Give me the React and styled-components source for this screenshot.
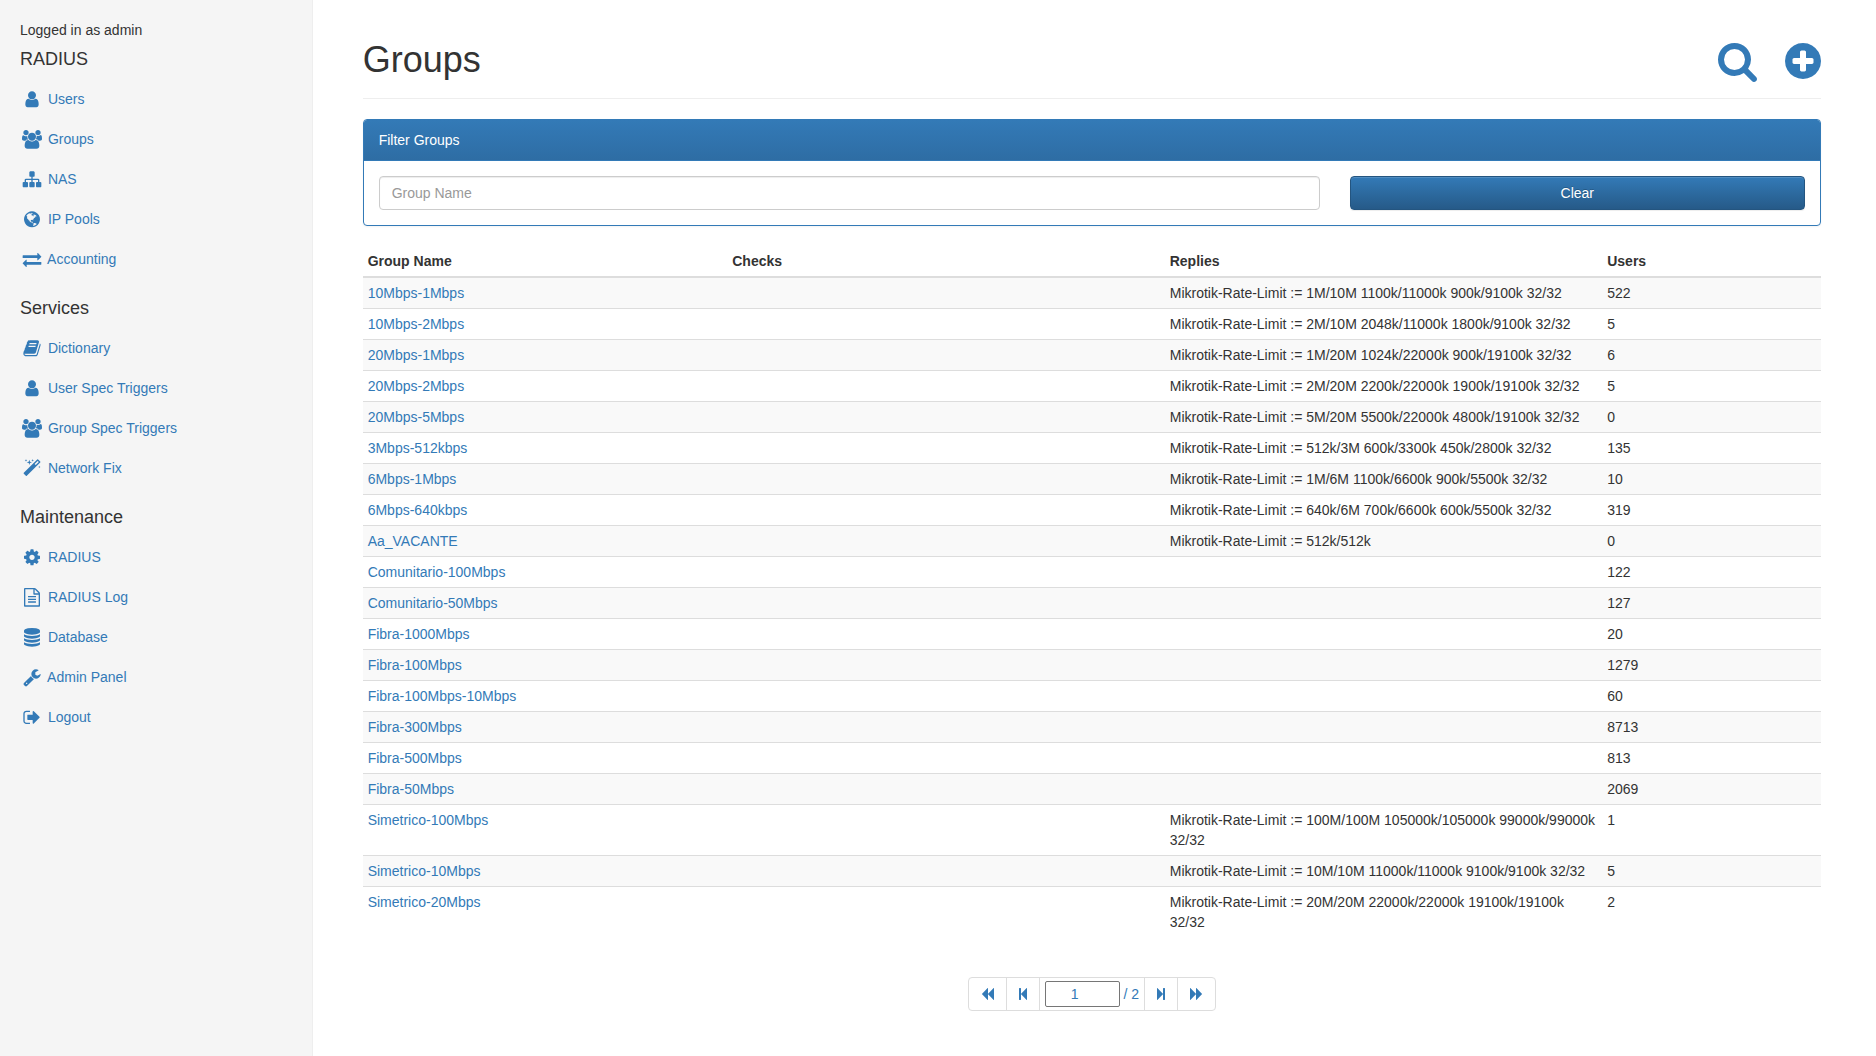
import React, { useState } from "react";
import styled, { createGlobalStyle, ThemeProvider } from "styled-components";

const theme = {
  link: "#337ab7",
  text: "#333",
  line: "#ddd",
  faint: "#eee",
  panel: "#f5f5f5",
  stripe: "#f9f9f9",
};

const GlobalStyle = createGlobalStyle`
  *, *::before, *::after { box-sizing: border-box; }
  body {
    margin: 0;
    background: #fff;
    color: #333;
    font-family: "Liberation Sans", Arial, sans-serif;
    font-size: 14px;
    line-height: 20px;
  }
  a { color: #337ab7; text-decoration: none; }
`;

/* Glyph outlines, drawn on a 1792-unit em square. */
const glyphs = {
  user: "M1536 1399q0 109-62.5 187t-150.5 78h-854q-88 0-150.5-78t-62.5-187q0-85 8.5-160.5t31.5-152 58.5-131 94-89 134.5-34.5q131 128 313 128t313-128q76 0 134.5 34.5t94 89 58.5 131 31.5 152 8.5 160.5zm-256-887q0 159-112.5 271.5t-271.5 112.5-271.5-112.5-112.5-271.5 112.5-271.5 271.5-112.5 271.5 112.5 112.5 271.5z",
  users: "M657 896q-162 5-265 128h-134q-82 0-138-40.5t-56-118.5q0-353 124-353 6 0 43.5 21t97.5 42.5 119 21.5q67 0 133-23-5 37-5 66 0 159 81 288zm1071 637q0 120-73 189.5t-194 69.5h-874q-121 0-194-69.5t-73-189.5q0-53 3.5-103.5t14-109 26.5-108.5 43-97.5 62-81 85.5-53.5 111.5-20q10 0 43 21.5t73 48 107 48 135 21.5 135-21.5 107-48 73-48 43-21.5q61 0 111.5 20t85.5 53.5 62 81 43 97.5 26.5 108.5 14 109 3.5 103.5zm-1024-1277q0 106-75 181t-181 75-181-75-75-181 75-181 181-75 181 75 75 181zm704 384q0 159-112.5 271.5t-271.5 112.5-271.5-112.5-112.5-271.5 112.5-271.5 271.5-112.5 271.5 112.5 112.5 271.5zm576 225q0 78-56 118.5t-138 40.5h-134q-103-123-265-128 81-129 81-288 0-29-5-66 66 23 133 23 59 0 119-21.5t97.5-42.5 43.5-21q124 0 124 353zm-128-609q0 106-75 181t-181 75-181-75-75-181 75-181 181-75 181 75 75 181z",
  sitemap: "M1792 1248v320q0 40-28 68t-68 28h-320q-40 0-68-28t-28-68v-320q0-40 28-68t68-28h96v-192h-512v192h96q40 0 68 28t28 68v320q0 40-28 68t-68 28h-320q-40 0-68-28t-28-68v-320q0-40 28-68t68-28h96v-192h-512v192h96q40 0 68 28t28 68v320q0 40-28 68t-68 28h-320q-40 0-68-28t-28-68v-320q0-40 28-68t68-28h96v-192q0-52 38-90t90-38h512v-192h-96q-40 0-68-28t-28-68v-320q0-40 28-68t68-28h320q40 0 68 28t28 68v320q0 40-28 68t-68 28h-96v192h512q52 0 90 38t38 90v192h96q40 0 68 28t28 68z",
  globe: "M896 128q209 0 385.5 103t279.5 279.5 103 385.5-103 385.5-279.5 279.5-385.5 103-385.5-103-279.5-279.5-103-385.5 103-385.5 279.5-279.5 385.5-103zm274 521q-2 1-9.5 9.5t-13.5 9.5q2 0 4.5-5t5-11 3.5-7q6-7 22-15 14-6 52-12 34-8 51 11-2-2 9.5-13t14.5-12q3-2 15-4.5t15-7.5l2-22q-12 1-17.5-7t-6.5-21q0 2-6 8 0-7-4.5-8t-11.5 1-9 1q-10-3-15-7.5t-8-16.5-4-15q-2-5-9.5-11t-9.5-10q-1-2-2.5-5.5t-3-6.5-4-5.5-5.5-2.5-7 5-7.5 10-4.5 5q-3-2-6-1.5t-4.5 1-4.5 3-5 3.5q-3 2-8.5 3t-8.5 2q15-5-1-11-10-4-16-3 9-4 7.5-12t-8.5-14h5q-1-4-8.5-8.5t-17.5-8.5-13-6q-8-5-34-9.5t-33-.5q-5 6-4.5 10.5t4 14 3.5 12.5q1 6-5.5 13t-6.5 12q0 7 14 15.5t10 21.5q-3 8-16 16t-16 12q-5 8-1.5 18.5t10.5 16.5q2 2 1.5 4t-3.5 4.5-5.5 4-6.5 3.5l-3 2q-11 5-20.5-6t-13.5-26q-7-25-16-30-23-8-29 1-5-13-41-26-25-9-58-4 6-1 0-15-7-15-19-12 3-6 4-17.5t1-13.5q3-13 12-23 1-1 7-8.5t9.5-13.5.5-6q35 4 50-11 5-5 11.5-17t10.5-17q9-6 14-5.5t14.5 5.5 14.5 5q14 1 15.5-11t-7.5-20q12 1 3-17-4-7-8-9-12-4-27 5-8 4 2 8-1-1-9.5 10.5t-16.5 17.5-16-5q-1-1-5.5-13.5t-9.5-13.5q-8 0-16 15 3-8-11-15t-24-8q19-12-8-27-7-4-20.5-5t-19.5 4q-5 7-5.5 11.5t5 8 10.5 5.5 11.5 4 8.5 3q14 10 8 14-2 1-8.5 3.5t-11.5 4.5-6 4q-3 4 0 14t-2 14q-5-5-9-17.5t-7-16.5q7 9-25 6l-10-1q-4 0-16 2t-20.5 1-13.5-8q-4-8 0-20 1-4 4-2-4-3-11-9.5t-10-8.5q-46 15-94 41 6 1 12-1 5-2 13-6.5t10-5.5q34-14 42-7l5-5q14 16 20 25-7-4-30-1-20 6-22 12 7 12 5 18-4-3-11.5-10t-14.5-11-15-5q-16 0-22 1-146 80-235 222 7 7 12 8 4 1 5 9t2.5 11 11.5-3q9 8 3 19 1-1 44 27 19 17 21 21 3 11-10 18-1-2-9-9t-9-4q-3 5 .5 18.5t10.5 12.5q-7 0-9.5 16t-2.5 35.5-1 23.5l2 1q-3 12 5.5 34.5t21.5 19.5q-13 3 20 43 6 8 8 9 3 2 12 7.5t15 10 10 10.5q4 5 10 22.5t14 23.5q-2 6 9.5 20t10.5 23q-1 0-2.5 1t-2.5 1q3 7 15.5 14t15.5 13q1 3 2 10t3 11 8 2q2-20-24-62-15-25-17-29-3-5-5.5-15.5t-4.5-14.5q2 0 6 1.5t8.5 3.5 7.5 4 2 3q-3 7 2 17.5t12 18.5 17 19 12 13q6 6 14 19.5t0 13.5q9 0 20 10t17 20q5 8 8 26t5 24q2 7 8.5 13.5t12.5 9.5l16 8 13 7q5 2 18.5 10.5t21.5 11.5q10 4 16 4t14.5-2.5 13.5-3.5q15-2 29 15t21 21q36 19 55 11-2 1 .5 7.5t8 15.5 9 14.5 5.5 8.5q5 6 18 15t18 15q6-4 7-9-3 8 7 20t18 10q14-3 14-32-31 15-49-18 0-1-2.5-5.5t-4-8.5-2.5-8.5 0-7.5 5-3q9 0 10-3.5t-2-12.5-4-13q-1-8-11-20t-12-15q-5 9-16 8t-16-9q0 1-1.5 5.5t-1.5 6.5q-13 0-15-1 1-3 2.5-17.5t3.5-22.5q1-4 5.5-12t7.5-14.5 4-12.5-4.5-9.5-17.5-2.5q-19 1-26 20-1 3-3 10.5t-5 11.5-9 7q-7 3-24 2t-24-5q-13-8-22.5-29t-9.5-37q0-10 2.5-26.5t3-25-5.5-24.5q3-2 9-9.5t10-10.5q2-1 4.5-1.5t4.5 0 4-1.5 3-6q-1-1-4-3-3-3-4-3 7 3 28.5-1.5t27.5 1.5q15 11 22-2 0-1-2.5-9.5t-.5-13.5q5 27 29 9 3 3 15.5 5t17.5 5q3 2 7 5.5t5.5 4.5 5-.5 8.5-6.5q10 14 12 24 11 40 19 44 7 3 11 2t4.5-9.5 0-14-1.5-12.5l-1-8v-18l-1-8q-15-3-18.5-12t1.5-18.5 15-18.5q1-1 8-3.5t15.5-6.5 12.5-8q21-19 15-35 7 0 11-9-1 0-5-3t-7.5-5-4.5-2q9-5 2-16 5-3 7.5-11t7.5-10q9 12 21 2 8-8 1-16 5-7 20.5-10.5t18.5-9.5q7 2 8-2t1-12 3-12q4-5 15-9t13-5l17-11q3-4 0-4 18 2 31-11 10-11-6-20 3-6-3-9.5t-15-5.5q3-1 11.5-.5t10.5-1.5q15-10-7-16-17-5-43 12zm-163 877q206-36 351-189-3-3-12.5-4.5t-12.5-3.5q-18-7-24-8 1-7-2.5-13t-8-9-12.5-8-11-7q-2-2-7-6t-7-5.5-7.5-4.5-8.5-2-10 1l-3 1q-3 1-5.5 2.5t-5.5 3-4 3 0 2.5q-21-17-36-22-5-1-11-5.5t-10.5-7-10-1.5-11.5 7q-5 5-6 15t-2 13q-7-5 0-17.5t2-18.5q-3-6-10.5-4.5t-12 4.5-11.5 8.5-9 6.5-8.5 5.5-8.5 7.5q-3 4-6 12t-5 11q-2-4-11.5-6.5t-9.5-5.5q2 10 4 35t5 38q7 31-12 48-27 25-29 40-4 22 12 26 0 7-8 20.5t-7 21.5q0 6 2 16z",
  exchange: "M1792 1184v192q0 13-9.5 22.5t-22.5 9.5h-1376v192q0 13-9.5 22.5t-22.5 9.5q-12 0-24-10l-319-320q-9-9-9-22 0-14 9-23l320-320q9-9 23-9 13 0 22.5 9.5t9.5 22.5v192h1376q13 0 22.5 9.5t9.5 22.5zm0-544q0 14-9 23l-320 320q-9 9-23 9-13 0-22.5-9.5t-9.5-22.5v-192h-1376q-13 0-22.5-9.5t-9.5-22.5v-192q0-13 9.5-22.5t22.5-9.5h1376v-192q0-14 9-23t23-9q12 0 24 10l319 319q9 9 9 23z",
  book: "M1703 478q40 57 18 129l-275 906q-19 64-76.5 107.5t-122.5 43.5h-923q-77 0-148.5-53.5t-99.5-131.5q-24-67-2-127 0-4 3-27t4-37q1-8-3-21.5t-3-19.5q2-11 8-21t16.5-23.5 16.5-23.5q23-38 45-91.5t30-91.5q3-10 .5-30t-.5-28q3-11 17-28t17-23q21-36 42-92t25-90q1-9-2.5-32t.5-28q4-13 22-30.5t22-22.5q19-26 42.5-84.5t27.5-96.5q1-8-3-25.5t-2-26.5q2-8 9-18t18-23 17-21q8-12 16.5-30.5t15-35 16-36 19.5-32 26.5-23.5 36-11.5 47.5 5.5l-1 3q38-9 51-9h761q74 0 114 56t18 130l-274 906q-36 119-71.5 153.5t-128.5 34.5h-869q-27 0-38 15-11 16-1 43 24 70 144 70h923q29 0 56-15.5t35-41.5l300-987q7-22 5-57 38 15 59 43zm-1064 2q-4 13 2 22.5t20 9.5h608q13 0 25.5-9.5t16.5-22.5l21-64q4-13-2-22.5t-20-9.5h-608q-13 0-25.5 9.5t-16.5 22.5zm-83 256q-4 13 2 22.5t20 9.5h608q13 0 25.5-9.5t16.5-22.5l21-64q4-13-2-22.5t-20-9.5h-608q-13 0-25.5 9.5t-16.5 22.5z",
  magic: "M1254 581l293-293-107-107-293 293zm447-293q0 27-18 45l-1286 1286q-18 18-45 18t-45-18l-198-198q-18-18-18-45t18-45l1286-1286q18-18 45-18t45 18l198 198q18 18 18 45zm-1351-190l98 30-98 30-30 98-30-98-98-30 98-30 30-98zm350 162l196 60-196 60-60 196-60-196-196-60 196-60 60-196zm930 478l98 30-98 30-30 98-30-98-98-30 98-30 30-98zm-640-640l98 30-98 30-30 98-30-98-98-30 98-30 30-98z",
  cog: "M1152 896q0-106-75-181t-181-75-181 75-75 181 75 181 181 75 181-75 75-181zm512-109v222q0 12-8 23t-20 13l-185 28q-19 54-39 91 35 50 107 138 10 12 10 25t-9 23q-27 37-99 108t-94 71q-12 0-26-9l-138-108q-44 23-91 38-16 136-29 186-7 28-36 28h-222q-14 0-24.5-8.5t-11.5-21.5l-28-184q-49-16-90-37l-141 107q-10 9-25 9-14 0-25-11-126-114-165-168-7-10-7-23 0-12 8-23 15-21 51-66.5t54-70.5q-27-50-41-99l-183-27q-13-2-21-12.5t-8-23.5v-222q0-12 8-23t19-13l186-28q14-46 39-92-40-57-107-138-10-12-10-24 0-10 9-23 26-36 98.5-107.5t94.5-71.5q13 0 26 10l138 107q44-23 91-38 16-136 29-186 7-28 36-28h222q14 0 24.5 8.5t11.5 21.5l28 184q49 16 90 37l142-107q9-9 24-9 13 0 25 10 129 119 165 170 7 8 7 22 0 12-8 23-15 21-51 66.5t-54 70.5q26 50 41 98l183 28q13 2 21 12.5t8 23.5z",
  fileText: "M1596 380q28 28 48 76t20 88v1152q0 40-28 68t-68 28h-1344q-40 0-68-28t-28-68v-1600q0-40 28-68t68-28h896q40 0 88 20t76 48zm-444-244v376h376q-10-29-22-41l-313-313q-12-12-41-22zm384 1528v-1024h-416q-40 0-68-28t-28-68v-416h-768v1536h1280zm-1024-864q0-14 9-23t23-9h704q14 0 23 9t9 23v64q0 14-9 23t-23 9h-704q-14 0-23-9t-9-23v-64zm736 224q14 0 23 9t9 23v64q0 14-9 23t-23 9h-704q-14 0-23-9t-9-23v-64q0-14 9-23t23-9h704zm0 256q14 0 23 9t9 23v64q0 14-9 23t-23 9h-704q-14 0-23-9t-9-23v-64q0-14 9-23t23-9h704z",
  database: "M896 768q237 0 443-43t325-127v170q0 69-103 128t-280 93.5-385 34.5-385-34.5-280-93.5-103-128v-170q119 84 325 127t443 43zm0 768q237 0 443-43t325-127v170q0 69-103 128t-280 93.5-385 34.5-385-34.5-280-93.5-103-128v-170q119 84 325 127t443 43zm0-384q237 0 443-43t325-127v170q0 69-103 128t-280 93.5-385 34.5-385-34.5-280-93.5-103-128v-170q119 84 325 127t443 43zm0-1152q208 0 385 34.5t280 93.5 103 128v128q0 69-103 128t-280 93.5-385 34.5-385-34.5-280-93.5-103-128v-128q0-69 103-128t280-93.5 385-34.5z",
  wrench: "M448 1472q0-26-19-45t-45-19-45 19-19 45 19 45 45 19 45-19 19-45zm644-420l-682 682q-37 37-90 37-52 0-91-37l-106-108q-38-36-38-90 0-53 38-91l681-681q39 98 114.5 173.5t173.5 114.5zm634-435q0 39-23 106-47 134-164.5 217.5t-258.5 83.5q-185 0-316.5-131.5t-131.5-316.5 131.5-316.5 316.5-131.5q58 0 121.5 16.5t107.5 46.5q16 11 16 28t-16 28l-293 169v224l193 107q5-3 79-48.5t135.5-81 70.5-35.5q15 0 23.5 10t8.5 25z",
  signOut: "M704 1440q0 4 1 20t.5 26.5-3 23.5-10 19.5-20.5 6.5h-320q-119 0-203.5-84.5t-84.5-203.5v-704q0-119 84.5-203.5t203.5-84.5h320q13 0 22.5 9.5t9.5 22.5q0 4 1 20t.5 26.5-3 23.5-10 19.5-20.5 6.5h-320q-66 0-113 47t-47 113v704q0 66 47 113t113 47h312l11.5 1 11.5 3 8 5.5 7 9 2 13.5zm928-544q0 26-19 45l-544 544q-19 19-45 19t-45-19-19-45v-288h-448q-26 0-45-19t-19-45v-384q0-26 19-45t45-19h448v-288q0-26 19-45t45-19 45 19l544 544q19 19 19 45z",
  search: "M1216 832q0-185-131.5-316.5t-316.5-131.5-316.5 131.5-131.5 316.5 131.5 316.5 316.5 131.5 316.5-131.5 131.5-316.5zm512 832q0 52-38 90t-90 38q-54 0-90-38l-343-342q-179 124-399 124-143 0-273.5-55.5t-225-150-150-225-55.5-273.5 55.5-273.5 150-225 225-150 273.5-55.5 273.5 55.5 225 150 150 225 55.5 273.5q0 220-124 399l343 343q37 37 37 90z",
  plusCircle: "M1344 960v-128q0-26-19-45t-45-19h-256v-256q0-26-19-45t-45-19h-128q-26 0-45 19t-19 45v256h-256q-26 0-45 19t-19 45v128q0 26 19 45t45 19h256v256q0 26 19 45t45 19h128q26 0 45-19t19-45v-256h256q26 0 45-19t19-45zm320-64q0 209-103 385.5t-279.5 279.5-385.5 103-385.5-103-279.5-279.5-103-385.5 103-385.5 279.5-279.5 385.5-103 385.5 103 279.5 279.5 103 385.5z",
  backward: "M1683 141q19-19 32-13t13 32v1472q0 26-13 32t-32-13l-710-710q-9-9-13-19v710q0 26-13 32t-32-13l-710-710q-19-19-19-45t19-45l710-710q19-19 32-13t13 32v710q4-10 13-19z",
  forward: "M109 1651q-19 19-32 13t-13-32v-1472q0-26 13-32t32 13l710 710q8 8 13 19v-710q0-26 13-32t32 13l710 710q19 19 19 45t-19 45l-710 710q-19 19-32 13t-13-32v-710q-5 10-13 19z",
  stepBackward: "M1363 141q19-19 32-13t13 32v1472q0 26-13 32t-32-13l-710-710q-8-9-13-19v678q0 26-19 45t-45 19h-128q-26 0-45-19t-19-45v-1408q0-26 19-45t45-19h128q26 0 45 19t19 45v678q5-10 13-19z",
  stepForward: "M429 1651q-19 19-32 13t-13-32v-1472q0-26 13-32t32 13l710 710q8 8 13 19v-678q0-26 19-45t45-19h128q26 0 45 19t19 45v1408q0 26-19 45t-45 19h-128q-26 0-45-19t-19-45v-678q-5 10-13 19z",
};

const Svg = styled.svg`
  display: inline-block;
  vertical-align: top;
  width: ${(p) => p.$w}px;
  height: ${(p) => p.$h}px;
  fill: currentColor;
`;

const Icon = ({ name, w, h, box }) => (
  <Svg $w={w} $h={h} viewBox={box} aria-hidden="true">
    <path d={glyphs[name]} />
  </Svg>
);

const NavIcon = ({ name }) => (
  <Icon name={name} w={24} h={20} box={name === "users" ? "-128 -96 2304 1920" : "-256 -96 2304 1920"} />
);

const Layout = styled.div`
  display: grid;
  grid-template-columns: minmax(0, 1fr) minmax(0, 5fr);
  min-height: 100vh;
`;

const Sidebar = styled.aside`
  padding: 20px;
  background: ${(p) => p.theme.panel};
  border-right: 1px solid ${(p) => p.theme.faint};
`;

const LoggedIn = styled.p`
  margin: 0 0 10px;
`;

const NavHeading = styled.h4`
  margin: 0 0 10px;
  font-size: 18px;
  font-weight: 500;
  line-height: 19px;
`;

const NavList = styled.ul`
  list-style: none;
  margin: 0 -20px 20px;
  padding: 0;
`;

const NavLink = styled.a`
  display: block;
  padding: 10px 20px;
`;

const Main = styled.main`
  padding: 40px 55px 20px 50px;
`;

const PageHeader = styled.header`
  display: flex;
  justify-content: space-between;
  align-items: flex-start;
  padding-bottom: 16px;
  margin-bottom: 20px;
  border-bottom: 1px solid ${(p) => p.theme.faint};
`;

const Title = styled.h1`
  margin: 0;
  font-size: 36px;
  font-weight: 500;
  line-height: 40px;
`;

const Actions = styled.div`
  display: flex;
  gap: 28px;
`;

const IconButton = styled.button`
  display: block;
  padding: 0;
  border: 0;
  background: none;
  color: ${(p) => p.theme.link};
  cursor: pointer;
`;

const Panel = styled.section`
  margin-bottom: 20px;
  border: 1px solid ${(p) => p.theme.link};
  border-radius: 4px;
  box-shadow: 0 1px 2px rgba(0, 0, 0, 0.05);
`;

const PanelHeading = styled.label`
  display: block;
  padding: 10px 15px;
  color: #fff;
  background: linear-gradient(to bottom, #337ab7, #2e6da4);
  border-bottom: 1px solid ${(p) => p.theme.link};
  border-radius: 3px 3px 0 0;
`;

const PanelBody = styled.div`
  display: grid;
  grid-template-columns: minmax(0, 2fr) minmax(0, 1fr);
  padding: 15px 0;
`;

const PanelCell = styled.div`
  padding: 0 15px;
`;

const TextInput = styled.input`
  display: block;
  width: 100%;
  height: 34px;
  padding: 6px 12px;
  font: inherit;
  color: #555;
  background: #fff;
  border: 1px solid #ccc;
  border-radius: 4px;
  box-shadow: inset 0 1px 1px rgba(0, 0, 0, 0.075);
  &::placeholder { color: #999; opacity: 1; }
`;

const PrimaryButton = styled.button`
  display: block;
  width: 100%;
  height: 34px;
  padding: 6px 12px;
  font: inherit;
  color: #fff;
  text-shadow: 0 -1px 0 rgba(0, 0, 0, 0.2);
  background: linear-gradient(to bottom, #337ab7, #265a88);
  border: 1px solid #245580;
  border-radius: 4px;
  box-shadow: inset 0 1px 0 rgba(255, 255, 255, 0.15), 0 1px 1px rgba(0, 0, 0, 0.075);
  cursor: pointer;
`;

const Table = styled.table`
  width: 100%;
  border-collapse: collapse;
  border-spacing: 0;
`;

const HeadCell = styled.th`
  width: ${(p) => p.$width};
  padding: 5px;
  text-align: left;
  vertical-align: bottom;
  border-bottom: 2px solid ${(p) => p.theme.line};
`;

const Row = styled.tr`
  &:nth-of-type(odd) { background: ${(p) => p.theme.stripe}; }
`;

const Cell = styled.td`
  padding: 5px;
  vertical-align: top;
  border-top: 1px solid ${(p) => p.theme.line};
`;

const PagerRow = styled.nav`
  display: flex;
  justify-content: center;
  margin: 40px 0 20px;
`;

const Pager = styled.ul`
  display: flex;
  list-style: none;
  margin: 0;
  padding: 0;
  border: 1px solid ${(p) => p.theme.line};
  border-radius: 4px;
`;

const PagerItem = styled.li`
  & + & { border-left: 1px solid ${(p) => p.theme.line}; }
`;

const PagerLink = styled.a`
  display: flex;
  align-items: center;
  height: 32px;
  padding: 0 12px;
`;

const PageField = styled.label`
  display: flex;
  align-items: center;
  gap: 4px;
  height: 32px;
  padding: 0 5px;
  color: ${(p) => p.theme.link};
`;

const PageInput = styled.input`
  width: 75px;
  height: 26px;
  padding: 1px 2px;
  font: inherit;
  color: inherit;
  text-align: center;
  background: #fff;
  border: 1px solid #767676;
  border-radius: 2px;
`;

const menu = [
  {
    title: "RADIUS",
    items: [
      ["user", "Users"],
      ["users", "Groups"],
      ["sitemap", "NAS"],
      ["globe", "IP Pools"],
      ["exchange", "Accounting"],
    ],
  },
  {
    title: "Services",
    items: [
      ["book", "Dictionary"],
      ["user", "User Spec Triggers"],
      ["users", "Group Spec Triggers"],
      ["magic", "Network Fix"],
    ],
  },
  {
    title: "Maintenance",
    items: [
      ["cog", "RADIUS"],
      ["fileText", "RADIUS Log"],
      ["database", "Database"],
      ["wrench", "Admin Panel"],
      ["signOut", "Logout"],
    ],
  },
];

const groups = [
  ["10Mbps-1Mbps", "1M/10M 1100k/11000k 900k/9100k 32/32", 522],
  ["10Mbps-2Mbps", "2M/10M 2048k/11000k 1800k/9100k 32/32", 5],
  ["20Mbps-1Mbps", "1M/20M 1024k/22000k 900k/19100k 32/32", 6],
  ["20Mbps-2Mbps", "2M/20M 2200k/22000k 1900k/19100k 32/32", 5],
  ["20Mbps-5Mbps", "5M/20M 5500k/22000k 4800k/19100k 32/32", 0],
  ["3Mbps-512kbps", "512k/3M 600k/3300k 450k/2800k 32/32", 135],
  ["6Mbps-1Mbps", "1M/6M 1100k/6600k 900k/5500k 32/32", 10],
  ["6Mbps-640kbps", "640k/6M 700k/6600k 600k/5500k 32/32", 319],
  ["Aa_VACANTE", "512k/512k", 0],
  ["Comunitario-100Mbps", "", 122],
  ["Comunitario-50Mbps", "", 127],
  ["Fibra-1000Mbps", "", 20],
  ["Fibra-100Mbps", "", 1279],
  ["Fibra-100Mbps-10Mbps", "", 60],
  ["Fibra-300Mbps", "", 8713],
  ["Fibra-500Mbps", "", 813],
  ["Fibra-50Mbps", "", 2069],
  ["Simetrico-100Mbps", "100M/100M 105000k/105000k 99000k/99000k 32/32", 1],
  ["Simetrico-10Mbps", "10M/10M 11000k/11000k 9100k/9100k 32/32", 5],
  ["Simetrico-20Mbps", "20M/20M 22000k/22000k 19100k/19100k 32/32", 2],
];

function PagerButton({ label, icon, step }) {
  return (
    <PagerItem>
      <PagerLink href="#" aria-label={label}>
        <Icon name={icon} w={step ? 8 : 13} h={14} box={step ? "384 0 1024 1792" : "64 0 1664 1792"} />
      </PagerLink>
    </PagerItem>
  );
}

export default function App() {
  const [filter, setFilter] = useState("");
  const [page, setPage] = useState("1");
  const shown = groups.filter(([name]) => name.toLowerCase().includes(filter.toLowerCase()));

  return (
    <ThemeProvider theme={theme}>
      <GlobalStyle />
      <Layout>
        <Sidebar>
          <LoggedIn>Logged in as admin</LoggedIn>
          {menu.map((section) => (
            <React.Fragment key={section.title}>
              <NavHeading>{section.title}</NavHeading>
              <NavList>
                {section.items.map(([icon, label]) => (
                  <li key={label}>
                    <NavLink href="#">
                      <NavIcon name={icon} />
                      {` ${label}`}
                    </NavLink>
                  </li>
                ))}
              </NavList>
            </React.Fragment>
          ))}
        </Sidebar>
        <Main>
          <PageHeader>
            <Title>Groups</Title>
            <Actions>
              <IconButton type="button" aria-label="Search">
                <Icon name="search" w={39} h={42} box="64 0 1664 1792" />
              </IconButton>
              <IconButton type="button" aria-label="Add group">
                <Icon name="plusCircle" w={36} h={42} box="128 0 1536 1792" />
              </IconButton>
            </Actions>
          </PageHeader>
          <Panel>
            <PanelHeading htmlFor="group-name">Filter Groups</PanelHeading>
            <PanelBody>
              <PanelCell>
                <TextInput
                  id="group-name"
                  type="text"
                  placeholder="Group Name"
                  value={filter}
                  onChange={(e) => setFilter(e.target.value)}
                />
              </PanelCell>
              <PanelCell>
                <PrimaryButton type="button" onClick={() => setFilter("")}>Clear</PrimaryButton>
              </PanelCell>
            </PanelBody>
          </Panel>
          <Table>
            <thead>
              <tr>
                <HeadCell $width="25%">Group Name</HeadCell>
                <HeadCell $width="30%">Checks</HeadCell>
                <HeadCell $width="30%">Replies</HeadCell>
                <HeadCell $width="15%">Users</HeadCell>
              </tr>
            </thead>
            <tbody>
              {shown.map(([name, limit, users]) => (
                <Row key={name}>
                  <Cell><a href="#">{name}</a></Cell>
                  <Cell />
                  <Cell>{limit && `Mikrotik-Rate-Limit := ${limit}`}</Cell>
                  <Cell>{users}</Cell>
                </Row>
              ))}
            </tbody>
          </Table>
          <PagerRow aria-label="Pages">
            <Pager>
              <PagerButton label="First page" icon="backward" />
              <PagerButton label="Previous page" icon="stepBackward" step />
              <PagerItem>
                <PageField>
                  <PageInput type="number" value={page} onChange={(e) => setPage(e.target.value)} />
                  / 2
                </PageField>
              </PagerItem>
              <PagerButton label="Next page" icon="stepForward" step />
              <PagerButton label="Last page" icon="forward" />
            </Pager>
          </PagerRow>
        </Main>
      </Layout>
    </ThemeProvider>
  );
}
